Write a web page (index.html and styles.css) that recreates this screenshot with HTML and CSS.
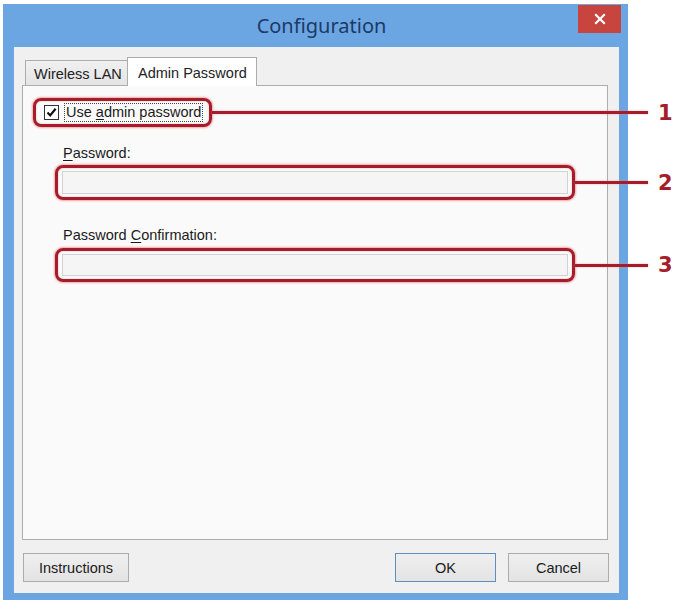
FILE: index.html
```html
<!DOCTYPE html>
<html>
<head>
<meta charset="utf-8">
<link rel="stylesheet" href="styles.css">
</head>
<body>
<div class="window">
  <div class="titlebar">
    <span></span>
    <span class="title">Configuration</span>
    <button class="close" aria-label="Close">
      <svg width="12" height="12" viewBox="0 0 12 12"><path d="M2 2 L10 10 M10 2 L2 10" stroke="#fff" stroke-width="2.2" stroke-linecap="square"/></svg>
    </button>
  </div>
  <div class="client">
    <div class="tabs">
      <div class="tab">Wireless LAN</div>
      <div class="tab active">Admin Password</div>
    </div>
    <div class="panel">
      <div class="redbox box-check">
        <span class="checkbox">
          <svg width="13" height="13" viewBox="0 0 13 13"><path d="M2.5 6.5 L5.2 9.4 L10.6 2.8" fill="none" stroke="#111" stroke-width="2.2"/></svg>
        </span>
        <span class="check-label">Use <u>a</u>dmin password</span>
        <span class="callout long"><span class="line"></span><span class="num">1</span></span>
      </div>
      <div class="label first"><u>P</u>assword:</div>
      <div class="redbox box-field">
        <div class="field"></div>
        <span class="callout short"><span class="line"></span><span class="num">2</span></span>
      </div>
      <div class="label second">Password <u>C</u>onfirmation:</div>
      <div class="redbox box-field box-field2">
        <div class="field"></div>
        <span class="callout short"><span class="line"></span><span class="num">3</span></span>
      </div>
    </div>
    <div class="buttons">
      <button class="btn btn-instr">Instructions</button>
      <span class="spacer"></span>
      <button class="btn btn-ok">OK</button>
      <button class="btn btn-cancel">Cancel</button>
    </div>
  </div>
</div>
</body>
</html>
```

FILE: styles.css
```css
* { box-sizing: border-box; }
html, body { margin: 0; padding: 0; background: #ffffff; }
body {
  font-family: "Liberation Sans", Arial, sans-serif;
  font-size: 14.5px;
  color: #1a1a1a;
  width: 678px;
  height: 604px;
  overflow: hidden;
}
.window {
  margin: 4px 0 0 3px;
  width: 625px;
  height: 596px;
  background: #6ca6e2;
  display: flex;
  flex-direction: column;
}
.titlebar {
  height: 43px;
  display: grid;
  grid-template-columns: 1fr auto 1fr;
  align-items: start;
}
.title {
  font-family: "Noto Sans", "Open Sans", sans-serif;
  font-size: 20px;
  color: #1b3a66;
  line-height: 20px;
  margin-top: 12px;
  margin-left: 12px;
}
.close {
  justify-self: end;
  margin: 1px 7px 0 0;
  width: 43px;
  height: 28px;
  border: none;
  padding: 0;
  background: #c8443f;
  display: flex;
  align-items: center;
  justify-content: center;
}
.client {
  flex: 1;
  margin: 0 9px 7px 11px;
  background: #f0f0f0;
  padding: 10px 11px 0 8px;
  display: flex;
  flex-direction: column;
}
.tabs {
  height: 28px;
  display: flex;
  align-items: flex-end;
  padding-left: 3px;
  position: relative;
  z-index: 1;
}
.tab {
  height: 25px;
  width: 103px;
  border: 1px solid #acacac;
  border-bottom: none;
  background: linear-gradient(#f0f0f0, #e4e4e4);
  padding: 5px 0 0 8px;
  line-height: 16px;
  color: #222;
}
.tab.active {
  height: 29px;
  width: 130px;
  margin-bottom: -1px;
  margin-left: -1px;
  background: #ffffff;
  padding: 7px 0 0 10px;
}
.panel {
  height: 455px;
  border: 1px solid #adadad;
  background: #fafafa;
  padding: 12px 0 0 10px;
}
.redbox {
  position: relative;
  border: 3px solid #a51d2a;
  border-radius: 8px;
  box-shadow: 0 0 2px 1px rgba(235, 130, 130, 0.7), inset 0 0 2px 0 rgba(235, 130, 130, 0.6);
}
.box-check {
  width: 179px;
  height: 29px;
  display: flex;
  align-items: center;
  padding-left: 8px;
}
.checkbox {
  width: 15px;
  height: 15px;
  border: 1px solid #333;
  background: #fff;
  display: flex;
  align-items: center;
  justify-content: center;
}
.check-label {
  display: block;
  margin-left: 5px;
  border: 1px dotted #444;
  padding: 0 1px;
  line-height: 17px;
  height: 19px;
  white-space: nowrap;
}
u { text-decoration: underline; text-underline-offset: 2px; }
.label {
  margin-left: 30px;
  line-height: 16px;
  white-space: nowrap;
}
.label.first { margin-top: 18px; }
.label.second { margin-top: 27px; }
.box-field {
  margin: 4px 0 0 22px;
  width: 520px;
  height: 35px;
  padding: 3px 4px;
}
.box-field2 { height: 34px; margin-top: 5px; }
.field {
  height: 100%;
  border: 1px solid #d2d2d2;
  background: #f5f5f5;
}
.callout {
  position: absolute;
  top: 50%;
  left: 100%;
  margin-left: 3px;
  transform: translateY(-50%);
  display: flex;
  align-items: center;
}
.line {
  height: 3px;
  background: #a51d2a;
  box-shadow: 0 0 2px rgba(235, 130, 130, 0.7);
}
.callout.long .line { width: 436px; }
.callout.short .line { width: 73px; }
.num {
  font-family: "DejaVu Sans", sans-serif;
  font-weight: bold;
  font-size: 21px;
  color: #a51d2a;
  margin-left: 10px;
  line-height: 22px;
}
.buttons {
  margin-top: 13px;
  display: flex;
  gap: 12px;
  padding-left: 1px;
}
.spacer { flex: 1; }
.btn {
  height: 29px;
  width: 101px;
  border: 1px solid #acacac;
  background: linear-gradient(#efefef, #e3e3e3);
  font-family: "Liberation Sans", Arial, sans-serif;
  font-size: 14.5px;
  color: #1a1a1a;
  padding: 0;
}
.btn-instr { width: 106px; }
.btn-ok { border-color: #5b8fc0; }
.btn-cancel { margin-right: -1px; }
```
